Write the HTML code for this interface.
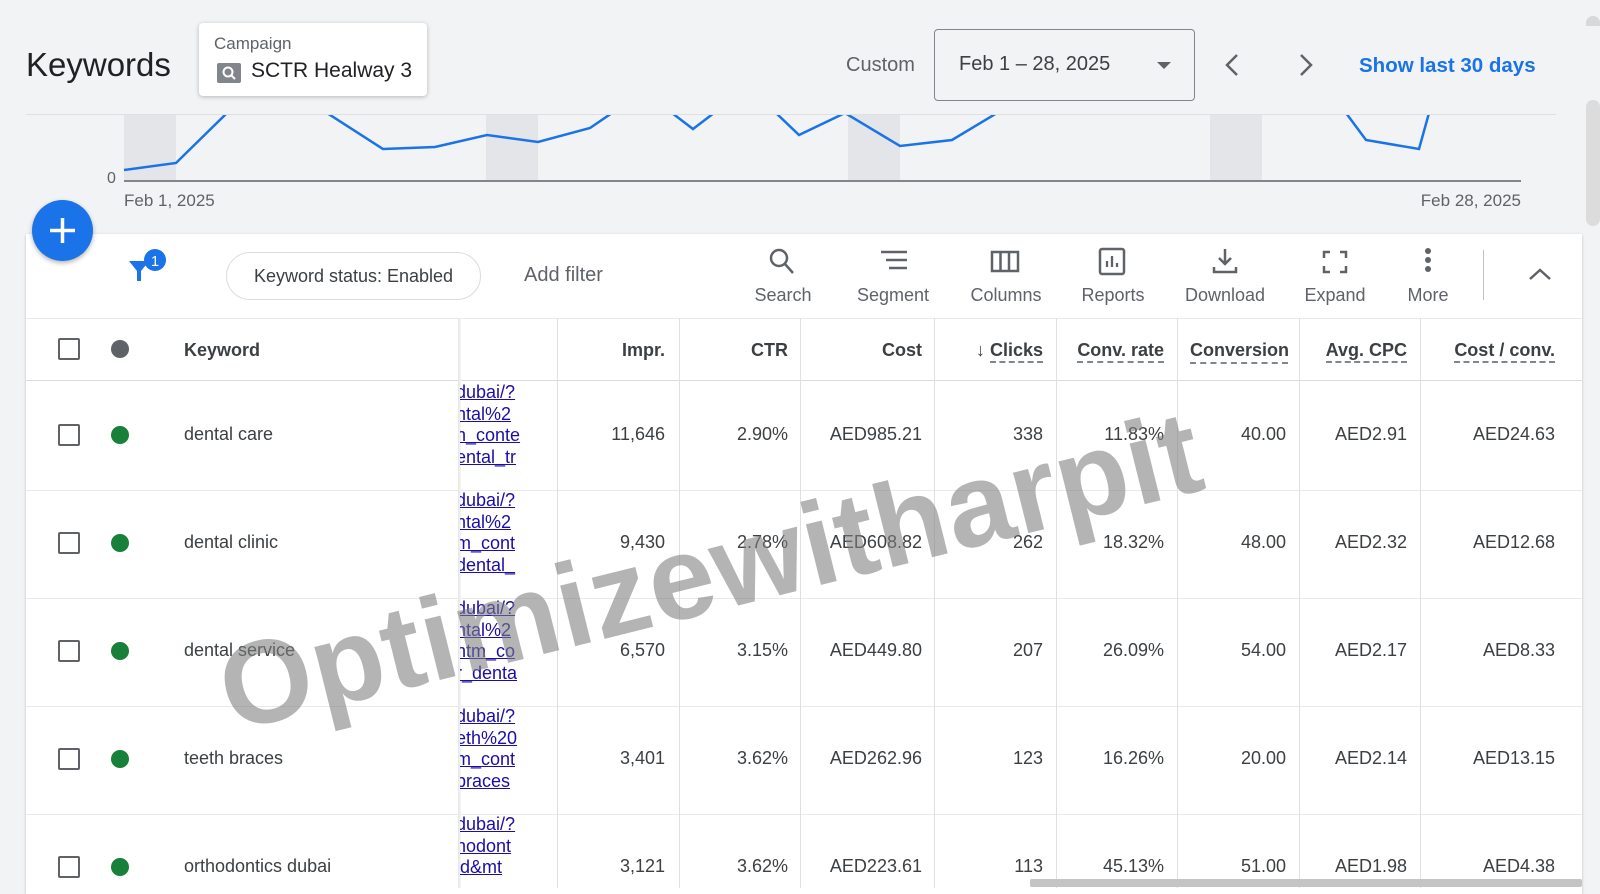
<!DOCTYPE html>
<html><head><meta charset="utf-8"><style>
*{box-sizing:border-box;margin:0;padding:0}
body{width:1600px;height:887px;background:#f1f3f4;font-family:"Liberation Sans",sans-serif;position:relative;overflow:hidden;color:#3c4043}
.a{position:absolute}
.t{color:#3c4043;font-size:18px;white-space:nowrap}
.card{left:26px;top:234px;width:1556px;height:660px;background:#fff;box-shadow:0 1px 3px rgba(0,0,0,.2)}
.tb{font-size:18px;color:#5f6368;text-align:center;width:100px;top:285px}
.hd{top:340px;font-size:18px;color:#3c4043;font-weight:bold;white-space:nowrap}
.dash{border-bottom:2px dashed #80868b;padding-bottom:1px}
.vl{position:absolute;top:318px;height:570px;width:1px;background:#e0e0e0}
.hl{position:absolute;left:26px;width:1556px;height:1px;background:#dadce0}
.cb{position:absolute;left:58px;width:22px;height:22px;border:2px solid #5f6368;border-radius:2px}
.dot{position:absolute;left:111px;width:18px;height:18px;border-radius:50%;background:#188038}
.num{position:absolute;font-size:18px;color:#3c4043;text-align:right;white-space:nowrap}
.lnk{position:absolute;left:460px;width:97px;overflow:hidden;font-size:18px;line-height:21.5px;color:#1a0dab;text-decoration:underline;white-space:nowrap}
.lnk div{margin-left:-4px}
</style></head><body>
<div class="a" style="left:26px;top:46px;font-size:33px;color:#202124">Keywords</div>
<div class="a" style="left:199px;top:23px;width:228px;height:73px;background:#fff;border-radius:4px;box-shadow:0 1px 4px rgba(0,0,0,.25)">
 <div class="a" style="left:15px;top:11px;font-size:17px;color:#5f6368">Campaign</div>
 <div class="a" style="left:18px;top:40px;width:24px;height:20px;background:#80868b;border-radius:2px"><svg width="24" height="20" viewBox="0 0 24 20"><circle cx="11" cy="9" r="4.5" fill="none" stroke="#fff" stroke-width="2"/><path d="M14 12l4 4" stroke="#fff" stroke-width="2"/></svg></div>
 <div class="a" style="left:52px;top:36px;font-size:21px;color:#202124">SCTR Healway 3</div>
</div>
<div class="a" style="left:846px;top:54px;font-size:20px;color:#5f6368">Custom</div>
<div class="a" style="left:934px;top:29px;width:261px;height:72px;border:1px solid #80868b;border-radius:4px">
 <div class="a" style="left:24px;top:23px;font-size:20px;color:#3c4043">Feb 1 – 28, 2025</div>
 <div class="a" style="left:222px;top:32px;width:0;height:0;border-left:7px solid transparent;border-right:7px solid transparent;border-top:7px solid #5f6368"></div>
</div>
<svg class="a" style="left:1220px;top:52px" width="26" height="26"><path d="M17 3L7 13l10 10" fill="none" stroke="#5f6368" stroke-width="2.5"/></svg>
<svg class="a" style="left:1292px;top:52px" width="26" height="26"><path d="M9 3l10 10L9 23" fill="none" stroke="#5f6368" stroke-width="2.5"/></svg>
<div class="a" style="left:1359px;top:54px;font-size:20.5px;color:#1a73e8;font-weight:bold">Show last 30 days</div>
<div class="a" style="left:26px;top:114px;width:1530px;height:1px;background:#e0e0e0"></div>
<svg class="a" style="left:0;top:115px" width="1560" height="100">
 <g fill="#e3e5e8"><rect x="124" y="0" width="52" height="66"/><rect x="486" y="0" width="52" height="66"/><rect x="848" y="0" width="52" height="66"/><rect x="1210" y="0" width="52" height="66"/></g>
 <line x1="124" y1="66" x2="1521" y2="66" stroke="#80868b" stroke-width="2"/>
 <polyline fill="none" stroke="#1a73e8" stroke-width="2.5" points="124,55 176,48 227,-2 327,-2 383,34 435,32 487,20 538,27 590,13 612,-2 672,-2 693,14 714,-2 776,-2 799,20 845,-2 900,31 952,25 997,-2 1346,-2 1366,25 1419,34 1429,-2"/>
 <text x="107" y="68" font-size="16" fill="#5f6368" font-family="Liberation Sans">0</text>
 <text x="124" y="91" font-size="17" fill="#5f6368" font-family="Liberation Sans">Feb 1, 2025</text>
 <text x="1521" y="91" font-size="17" fill="#5f6368" text-anchor="end" font-family="Liberation Sans">Feb 28, 2025</text>
</svg>
<div class="a card"></div>
<div class="a" style="left:32px;top:200px;width:61px;height:61px;border-radius:50%;background:#1a73e8;box-shadow:0 2px 5px rgba(0,0,0,.3)"><svg width="61" height="61"><path d="M30.5 18v25M18 30.5h25" stroke="#fff" stroke-width="3.5"/></svg></div>
<svg class="a" style="left:126px;top:248px" width="45" height="40"><path d="M3 13h20l-8 10v10h-4V23z" fill="#1a73e8"/><circle cx="29" cy="12" r="11" fill="#1a73e8"/><text x="29" y="18" font-size="15" fill="#fff" text-anchor="middle" font-family="Liberation Sans">1</text></svg>
<div class="a" style="left:226px;top:252px;width:255px;height:48px;border:1px solid #dadce0;border-radius:24px;font-size:18px;color:#3c4043;text-align:center;line-height:46px">Keyword status: Enabled</div>
<div class="a" style="left:524px;top:264px;font-size:20px;color:#5f6368">Add filter</div>
<svg class="a" style="left:766px;top:246px" width="32" height="32"><circle cx="13" cy="12" r="8" fill="none" stroke="#5f6368" stroke-width="2.5"/><path d="M19 18l8 9" stroke="#5f6368" stroke-width="2.5"/></svg>
<svg class="a" style="left:878px;top:248px" width="32" height="28"><path d="M3 4h26M8 12h21M11 20h18" stroke="#5f6368" stroke-width="2.5"/></svg>
<svg class="a" style="left:989px;top:248px" width="32" height="28"><rect x="3" y="4" width="26" height="19" fill="none" stroke="#5f6368" stroke-width="2.5"/><path d="M11.5 4v19M20 4v19" stroke="#5f6368" stroke-width="2.5"/></svg>
<svg class="a" style="left:1097px;top:246px" width="32" height="32"><rect x="3" y="3" width="24" height="25" rx="2" fill="none" stroke="#5f6368" stroke-width="2.5"/><path d="M10 21v-6M15 21V10M20 21v-4" stroke="#5f6368" stroke-width="2.3"/></svg>
<svg class="a" style="left:1209px;top:245px" width="32" height="32"><path d="M16 4v15M10 13l6 6 6-6M5 22v5h22v-5" fill="none" stroke="#5f6368" stroke-width="2.5"/></svg>
<svg class="a" style="left:1320px;top:248px" width="30" height="28"><path d="M4 10V4h6M20 4h6v6M26 18v6h-6M10 24H4v-6" fill="none" stroke="#5f6368" stroke-width="2.5"/></svg>
<svg class="a" style="left:1418px;top:246px" width="20" height="32"><circle cx="10" cy="5" r="3" fill="#5f6368"/><circle cx="10" cy="14" r="3" fill="#5f6368"/><circle cx="10" cy="23" r="3" fill="#5f6368"/></svg>
<div class="a tb" style="left:733px">Search</div>
<div class="a tb" style="left:843px">Segment</div>
<div class="a tb" style="left:956px">Columns</div>
<div class="a tb" style="left:1063px">Reports</div>
<div class="a tb" style="left:1175px">Download</div>
<div class="a tb" style="left:1285px">Expand</div>
<div class="a tb" style="left:1378px">More</div>
<div class="a" style="left:1483px;top:250px;width:1px;height:50px;background:#bdc1c6"></div>
<svg class="a" style="left:1526px;top:265px" width="28" height="18"><path d="M4 14l10-9 10 9" fill="none" stroke="#5f6368" stroke-width="2.5"/></svg>
<div class="hl" style="top:318px;background:#e8eaed"></div>
<div class="hl" style="top:380px"></div>
<div class="hl" style="top:490px;background:#e8eaed"></div>
<div class="hl" style="top:598px;background:#e8eaed"></div>
<div class="hl" style="top:706px;background:#e8eaed"></div>
<div class="hl" style="top:814px;background:#e8eaed"></div>
<div class="a" style="left:458px;top:318px;width:3px;height:570px;background:linear-gradient(90deg,#e6e6e6,#f5f5f5)"></div>
<div class="vl" style="left:557px"></div><div class="vl" style="left:679px"></div><div class="vl" style="left:800px"></div><div class="vl" style="left:934px"></div><div class="vl" style="left:1056px"></div><div class="vl" style="left:1177px"></div><div class="vl" style="left:1299px"></div><div class="vl" style="left:1420px"></div>
<div class="cb" style="top:338px"></div><div class="dot" style="top:340px;background:#5f6368"></div>
<div class="a hd" style="left:184px">Keyword</div>
<div class="a hd" style="right:935px">Impr.</div>
<div class="a hd" style="right:812px">CTR</div>
<div class="a hd" style="right:678px">Cost</div>
<div class="a hd" style="right:557px">↓ <span class="dash">Clicks</span></div>
<div class="a hd" style="right:436px"><span class="dash">Conv. rate</span></div>
<div class="a hd" style="left:1190px;width:98px;overflow:hidden;border-bottom:2px dashed #80868b;height:24px">Conversions</div>
<div class="a hd" style="right:193px"><span class="dash">Avg. CPC</span></div>
<div class="a hd" style="right:45px"><span class="dash">Cost / conv.</span></div>

<div class="cb" style="top:424px"></div><div class="dot" style="top:426px"></div><div class="a t" style="left:184px;top:424px">dental care</div>
<div class="lnk" style="top:382px"><div>dubai/?</div><div>ntal%2</div><div>n_conte</div><div>ental_tr</div></div>
<div class="num" style="right:935px;top:424px">11,646</div><div class="num" style="right:812px;top:424px">2.90%</div><div class="num" style="right:678px;top:424px">AED985.21</div><div class="num" style="right:557px;top:424px">338</div><div class="num" style="right:436px;top:424px">11.83%</div><div class="num" style="right:314px;top:424px">40.00</div><div class="num" style="right:193px;top:424px">AED2.91</div><div class="num" style="right:45px;top:424px">AED24.63</div>

<div class="cb" style="top:532px"></div><div class="dot" style="top:534px"></div><div class="a t" style="left:184px;top:532px">dental clinic</div>
<div class="lnk" style="top:490px"><div>dubai/?</div><div>ntal%2</div><div>m_cont</div><div>dental_</div></div>
<div class="num" style="right:935px;top:532px">9,430</div><div class="num" style="right:812px;top:532px">2.78%</div><div class="num" style="right:678px;top:532px">AED608.82</div><div class="num" style="right:557px;top:532px">262</div><div class="num" style="right:436px;top:532px">18.32%</div><div class="num" style="right:314px;top:532px">48.00</div><div class="num" style="right:193px;top:532px">AED2.32</div><div class="num" style="right:45px;top:532px">AED12.68</div>

<div class="cb" style="top:640px"></div><div class="dot" style="top:642px"></div><div class="a t" style="left:184px;top:640px">dental service</div>
<div class="lnk" style="top:598px"><div>dubai/?</div><div>ntal%2</div><div>ntm_co</div><div>r_denta</div></div>
<div class="num" style="right:935px;top:640px">6,570</div><div class="num" style="right:812px;top:640px">3.15%</div><div class="num" style="right:678px;top:640px">AED449.80</div><div class="num" style="right:557px;top:640px">207</div><div class="num" style="right:436px;top:640px">26.09%</div><div class="num" style="right:314px;top:640px">54.00</div><div class="num" style="right:193px;top:640px">AED2.17</div><div class="num" style="right:45px;top:640px">AED8.33</div>

<div class="cb" style="top:748px"></div><div class="dot" style="top:750px"></div><div class="a t" style="left:184px;top:748px">teeth braces</div>
<div class="lnk" style="top:706px"><div>dubai/?</div><div>eth%20</div><div>m_cont</div><div>braces</div></div>
<div class="num" style="right:935px;top:748px">3,401</div><div class="num" style="right:812px;top:748px">3.62%</div><div class="num" style="right:678px;top:748px">AED262.96</div><div class="num" style="right:557px;top:748px">123</div><div class="num" style="right:436px;top:748px">16.26%</div><div class="num" style="right:314px;top:748px">20.00</div><div class="num" style="right:193px;top:748px">AED2.14</div><div class="num" style="right:45px;top:748px">AED13.15</div>

<div class="cb" style="top:856px"></div><div class="dot" style="top:858px"></div><div class="a t" style="left:184px;top:856px">orthodontics dubai</div>
<div class="lnk" style="top:814px"><div>dubai/?</div><div>hodont</div><div>id&amp;mt</div></div>
<div class="num" style="right:935px;top:856px">3,121</div><div class="num" style="right:812px;top:856px">3.62%</div><div class="num" style="right:678px;top:856px">AED223.61</div><div class="num" style="right:557px;top:856px">113</div><div class="num" style="right:436px;top:856px">45.13%</div><div class="num" style="right:314px;top:856px">51.00</div><div class="num" style="right:193px;top:856px">AED1.98</div><div class="num" style="right:45px;top:856px">AED4.38</div>

<div class="a" style="left:1030px;top:879px;width:552px;height:8px;background:#c4c4c4;border-radius:2px"></div>
<div class="a" style="left:1586px;top:100px;width:14px;height:126px;background:#dcdcdc;border-radius:7px"></div>
<div class="a" style="left:1586px;top:16px;width:14px;height:10px;background:#d8d8d8;border-radius:7px 7px 0 0"></div>
<div class="a" style="left:222px;top:625px;font-size:118px;font-weight:bold;color:rgba(125,125,125,.58);white-space:nowrap;transform:rotate(-14deg);transform-origin:left center;letter-spacing:1px">Optimizewitharpit</div>
</body></html>
